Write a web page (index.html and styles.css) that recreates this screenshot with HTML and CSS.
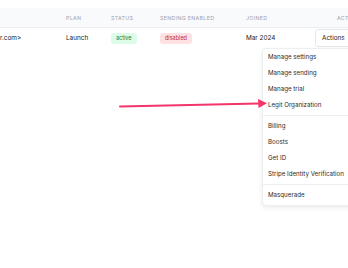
FILE: index.html
```html
<!DOCTYPE html>
<html lang="en">
<head>
    <meta charset="UTF-8">
    <title>Organizations</title>
    <link rel="stylesheet" href="styles.css">
</head>
<body>
    <div class="page">
        <div class="table">
            <div class="row head">
                <div></div>
                <div>Plan</div>
                <div>Status</div>
                <div>Sending enabled</div>
                <div>Joined</div>
                <div class="act-head">Actions</div>
            </div>
            <div class="row body">
                <div class="email">r.com&gt;</div>
                <div>Launch</div>
                <div><span class="badge green">active</span></div>
                <div><span class="badge red">disabled</span></div>
                <div>Mar 2024</div>
                <div><button class="btn">Actions</button></div>
            </div>
        </div>

        <div class="menu">
            <div class="item">Manage settings</div>
            <div class="item">Manage sending</div>
            <div class="item">Manage trial</div>
            <div class="item">Legit Organization</div>
            <div class="sep"></div>
            <div class="item">Billing</div>
            <div class="item">Boosts</div>
            <div class="item">Get ID</div>
            <div class="item">Stripe Identity Verification</div>
            <div class="sep"></div>
            <div class="item">Masquerade</div>
        </div>

        <!-- annotation arrow -->
        <svg class="arrow" width="348" height="268" viewBox="0 0 348 268">
            <line x1="120" y1="106.5" x2="259" y2="103.5" stroke="#f4356b" stroke-width="2" stroke-linecap="round"/>
            <polygon points="267,103.3 258,99 258.5,108" fill="#f4356b"/>
        </svg>
    </div>
</body>
</html>
```
FILE: styles.css
```css
body {
    margin: 0;
    font-family: 'Inter', sans-serif;
    color: #222;
    background: #fff;
    overflow: hidden;
}

.page {
    position: relative;
    width: 348px;
    height: 268px;
    padding-top: 8px;
    box-sizing: border-box;
}

.row {
    display: grid;
    grid-template-columns: 66px 45px 49px 86px 69px 1fr;
    align-items: center;
    border-bottom: 1px solid #eceef1;
}

.head {
    height: 19px;
    background: #f9fafb;
    font-size: 5.3px;
    letter-spacing: 0.06em;
    text-transform: uppercase;
    color: #9ca3af;
}

.act-head {
    padding-left: 22px;
    white-space: nowrap;
}

.body {
    height: 20px;
    font-size: 6.4px;
    border-bottom: none;
}

.email {
    white-space: nowrap;
}

.badge {
    display: inline-block;
    height: 11px;
    line-height: 11px;
    padding: 0 5px;
    border-radius: 3px;
    font-size: 5.5px;
}

.green {
    background: #dcfce7;
    color: #15803d;
}

.red {
    background: #fee2e2;
    color: #c0264a;
}

.btn {
    height: 18px;
    width: 50px;
    padding: 0 0 0 6px;
    text-align: left;
    font-family: inherit;
    font-size: 6.4px;
    color: #222;
    background: #fff;
    border: 1px solid #e5e7eb;
    border-radius: 3px;
}

.menu {
    position: absolute;
    left: 262px;
    top: 48px;
    width: 100px;
    padding-bottom: 2px;
    background: #fff;
    border: 1px solid #eceef1;
    border-radius: 4px;
    box-shadow: 0 2px 5px rgba(0, 0, 0, 0.08);
    font-size: 6.2px;
    color: #2b2b2b;
}

.item {
    height: 16px;
    line-height: 16px;
    padding-left: 5px;
    white-space: nowrap;
}

.sep {
    height: 1px;
    margin: 2px 0;
    background: #eceef1;
}

.arrow {
    position: absolute;
    left: 0;
    top: 0;
}
```
